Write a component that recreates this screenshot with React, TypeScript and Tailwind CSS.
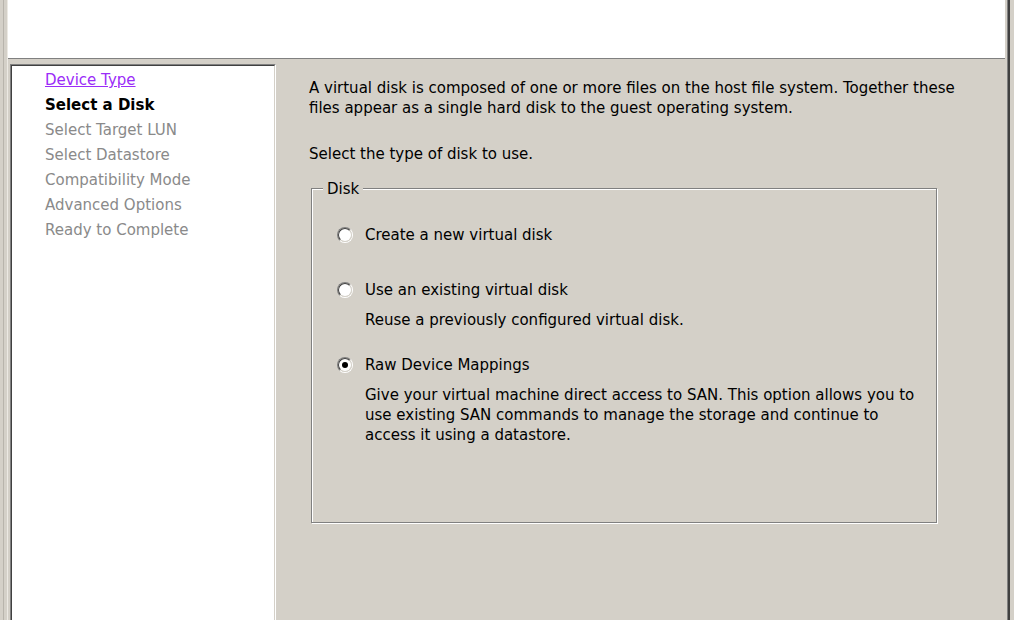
import React from 'react';

const steps = [
  { name: 'Device Type', state: 'done' },
  { name: 'Select a Disk', state: 'current' },
  { name: 'Select Target LUN', state: 'todo' },
  { name: 'Select Datastore', state: 'todo' },
  { name: 'Compatibility Mode', state: 'todo' },
  { name: 'Advanced Options', state: 'todo' },
  { name: 'Ready to Complete', state: 'todo' },
];

function Radio({ checked }: { checked?: boolean }) {
  return (
    <span className="w-[16px] h-[16px] shrink-0 rounded-full border border-t-[#808080] border-l-[#808080] border-b-white border-r-white flex">
      <span className="flex-1 rounded-full border border-t-[#404040] border-l-[#404040] border-b-[#d4d0c8] border-r-[#d4d0c8] bg-white flex items-center justify-center">
        {checked && <span className="w-[6px] h-[6px] rounded-full bg-black" />}
      </span>
    </span>
  );
}

export default function App() {
  return (
    <div className="w-[1014px] h-[620px] bg-[#d4d0c8] flex overflow-hidden font-['DejaVu_Sans',sans-serif] text-[15px] text-black">
      {/* left window frame */}
      <div className="w-[8px] shrink-0 flex">
        <div className="w-[3px]" />
        <div className="w-px bg-[#b8b4ac]" />
        <div className="w-[3px]" />
        <div className="w-px bg-[#ece9e3]" />
      </div>

      <div className="flex-1 flex flex-col min-w-0">
        {/* header */}
        <div className="h-[58px] shrink-0 bg-white" />
        <div className="h-px shrink-0 bg-[#808080]" />

        <div className="flex-1 flex pt-[5px] pl-[2px] min-h-0">
          {/* step list */}
          <div className="w-[266px] shrink-0 border-t border-l border-[#808080] border-r border-r-white">
            <div className="h-full border-t border-l border-[#404040] border-r border-r-[#d4d0c8] bg-white pl-[33px] pt-[2px]">
              {steps.map((s) => (
                <div key={s.name} className="leading-[25px]">
                  {s.state === 'done' && (
                    <a href="#" className="text-[#9b2cf8] underline">
                      {s.name}
                    </a>
                  )}
                  {s.state === 'current' && <span className="font-bold">{s.name}</span>}
                  {s.state === 'todo' && <span className="text-[#8a8a8a]">{s.name}</span>}
                </div>
              ))}
            </div>
          </div>

          {/* content */}
          <div className="flex-1 pl-[33px] pt-[14px] leading-[20px]">
            <p>
              A virtual disk is composed of one or more files on the host file system. Together these
              <br />
              files appear as a single hard disk to the guest operating system.
            </p>
            <p className="mt-[26px]">Select the type of disk to use.</p>

            <div className="relative mt-[24px] ml-[2px] w-[626px] h-[335px] border border-[#808080] shadow-[inset_1px_1px_0_#fff,1px_1px_0_#fff] pl-[25px] pt-[36px]">
              <span className="absolute left-[11px] top-[-10px] px-[4px] bg-[#d4d0c8]">Disk</span>

              <label className="flex items-center gap-[12px]">
                <Radio />
                <span>Create a new virtual disk</span>
              </label>

              <label className="flex items-center gap-[12px] mt-[35px]">
                <Radio />
                <span>Use an existing virtual disk</span>
              </label>
              <p className="ml-[28px] mt-[10px]">Reuse a previously configured virtual disk.</p>

              <label className="flex items-center gap-[12px] mt-[25px]">
                <Radio checked />
                <span>Raw Device Mappings</span>
              </label>
              <p className="ml-[28px] mt-[10px]">
                Give your virtual machine direct access to SAN. This option allows you to
                <br />
                use existing SAN commands to manage the storage and continue to
                <br />
                access it using a datastore.
              </p>
            </div>
          </div>
        </div>
      </div>

      {/* right window frame */}
      <div className="w-[9px] shrink-0 flex">
        <div className="w-[2px]" />
        <div className="w-px bg-[#808080]" />
        <div className="w-[2px] bg-[#404040]" />
        <div className="w-[4px]" />
      </div>
    </div>
  );
}
